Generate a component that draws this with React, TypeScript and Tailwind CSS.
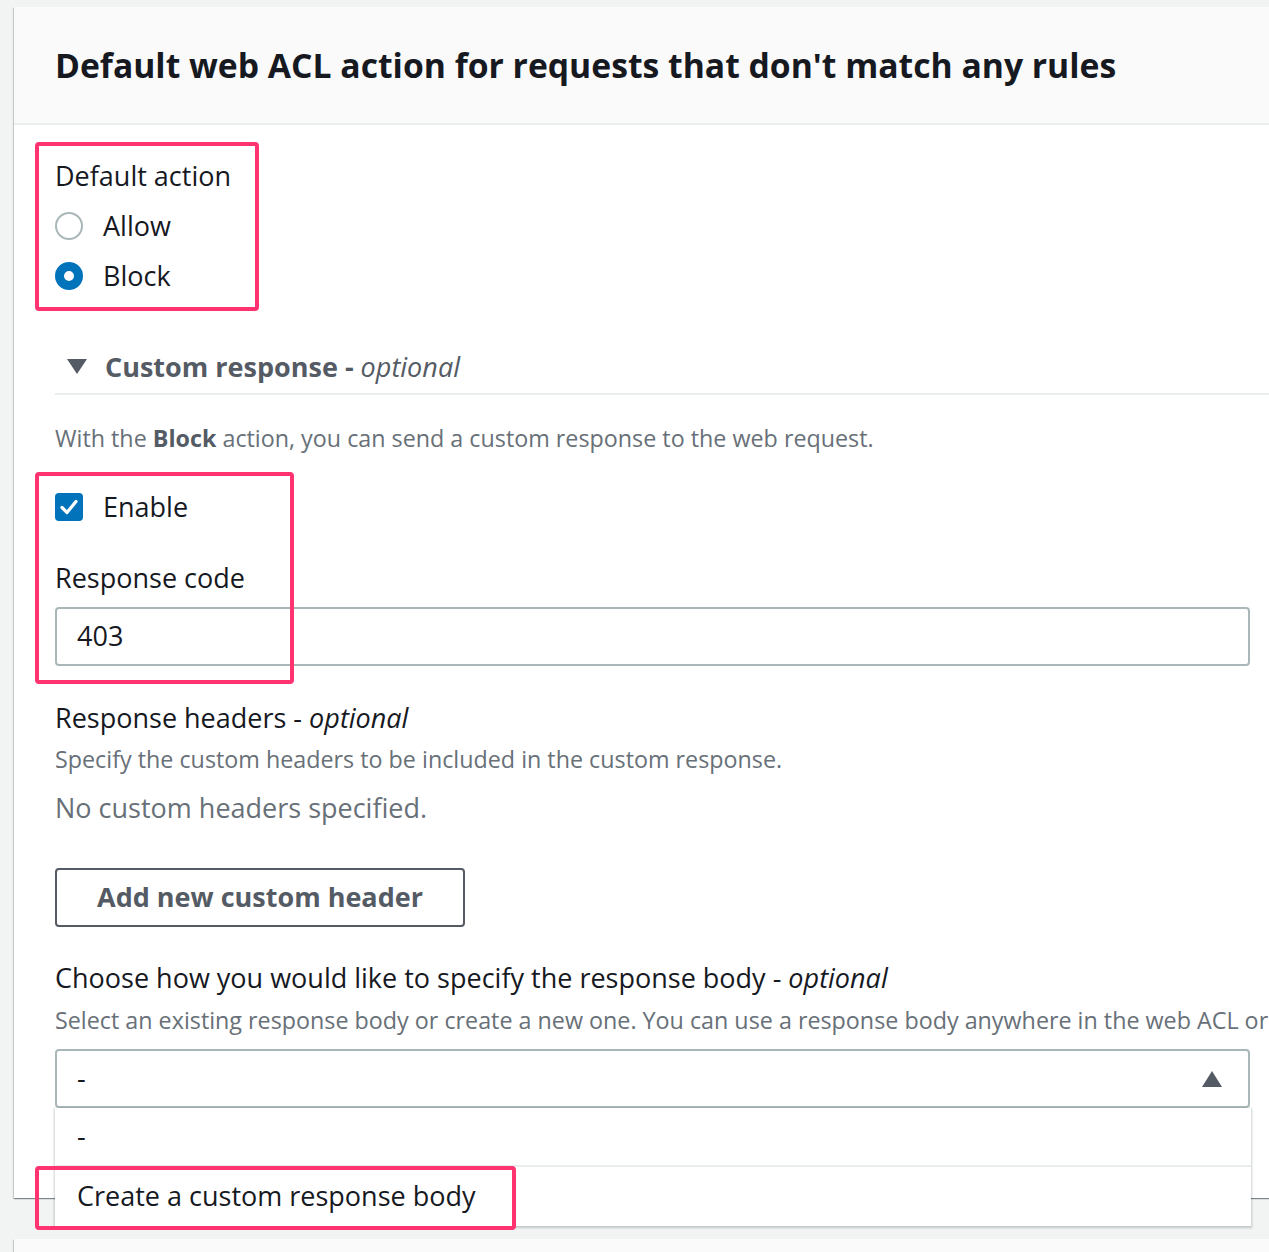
import React from "react";

export default function App() {
  return (
    <div
      className="w-[1269px] h-[1252px] overflow-hidden bg-[#f2f3f3] text-[#16191f]"
      style={{ fontFamily: '"Open Sans", "Noto Sans", sans-serif' }}
    >
      <div className="pt-[7px] pl-[14px]">
        <div className="w-[1300px] bg-white shadow-[0_1px_1px_0_rgba(0,28,36,0.3),1px_1px_1px_0_rgba(0,28,36,0.15),-1px_1px_1px_0_rgba(0,28,36,0.15)]">
          <div className="h-[118px] bg-[#fafafa] border-b-2 border-[#eaeded] pl-[41px] flex items-center">
            <h2 className="text-[33.7px] font-bold leading-[44px] whitespace-nowrap">
              Default web ACL action for requests that don't match any rules
            </h2>
          </div>
          <div className="pl-[41px] pb-[90px]">
            {/* Default action */}
            <div className="relative mt-[33px] w-fit pr-[20px]">
              <div className="absolute left-[-20px] top-[-16px] w-[224px] h-[169px] border-[4px] border-[#ff3370] rounded-[4px] pointer-events-none" />
              <div className="text-[27px] leading-[36px]">Default action</div>
              <div className="mt-[7px]">
                <div className="h-[50px] flex items-center">
                  <span className="w-[28px] h-[28px] rounded-full border-2 border-[#aab7b8] bg-white" />
                  <span className="ml-[20px] text-[27px] leading-[36px]">Allow</span>
                </div>
                <div className="h-[50px] flex items-center">
                  <span className="w-[28px] h-[28px] rounded-full border-[9px] border-[#0073bb] bg-white" />
                  <span className="ml-[20px] text-[27px] leading-[36px]">Block</span>
                </div>
              </div>
            </div>

            {/* Custom response expandable */}
            <div className="mt-[39px] h-[55px] border-b-2 border-[#eaeded] flex items-center">
              <svg width="20" height="15" viewBox="0 0 20 15" className="ml-[12px]">
                <polygon points="0,0 20,0 10,15" fill="#545b64" />
              </svg>
              <span className="ml-[18px] text-[27px] leading-[36px] text-[#545b64]">
                <span className="font-bold">Custom response</span>
                <span className="font-bold"> - </span>
                <span className="italic">optional</span>
              </span>
            </div>

            <div className="mt-[27px] text-[23.3px] leading-[32px] text-[#687078]">
              With the <span className="font-bold text-[#545b64]">Block</span> action, you can send a custom response to the web request.
            </div>

            {/* Enable + Response code */}
            <div className="relative mt-[33px]">
              <div className="absolute left-[-20px] top-[-15px] w-[259px] h-[212px] border-[4px] border-[#ff3370] rounded-[4px] pointer-events-none z-10" />
              <div className="h-[40px] flex items-center">
                <span className="w-[28px] h-[28px] rounded-[4px] bg-[#0073bb] flex items-center justify-center">
                  <svg width="20" height="20" viewBox="0 0 20 20">
                    <polyline points="3,10.5 8,15.5 17,4.5" fill="none" stroke="white" strokeWidth="3.2" strokeLinecap="round" strokeLinejoin="round" />
                  </svg>
                </span>
                <span className="ml-[20px] text-[27px] leading-[36px]">Enable</span>
              </div>
              <div className="mt-[33px] text-[27px] leading-[36px]">Response code</div>
              <div className="mt-[11px] w-[1195px] h-[59px] border-2 border-[#aab7b8] rounded-[4px] bg-white flex items-center pl-[20px] text-[27px]">
                403
              </div>
            </div>

            <div className="mt-[34px] text-[27px] leading-[36px]">
              Response headers - <span className="italic">optional</span>
            </div>
            <div className="mt-[7px] text-[23.3px] leading-[32px] text-[#687078]">
              Specify the custom headers to be included in the custom response.
            </div>
            <div className="mt-[15px] text-[27px] leading-[36px] text-[#687078]">
              No custom headers specified.
            </div>
            <button className="mt-[42px] w-[410px] h-[59px] border-2 border-[#545b64] rounded-[4px] bg-white text-[27px] font-bold text-[#545b64] flex items-center justify-center">
              Add new custom header
            </button>

            <div className="mt-[33px] text-[27px] leading-[36px] whitespace-nowrap">
              Choose how you would like to specify the response body - <span className="italic">optional</span>
            </div>
            <div className="mt-[8px] text-[23.3px] leading-[32px] text-[#687078] whitespace-nowrap">
              Select an existing response body or create a new one. You can use a response body anywhere in the web ACL or
            </div>

            {/* Select with open dropdown */}
            <div className="relative mt-[13px] w-[1195px]">
              <div className="h-[59px] border-2 border-[#aab7b8] rounded-[4px] bg-white flex items-center pl-[20px] pr-[26px] text-[27px]">
                <span className="flex-1">-</span>
                <svg width="20" height="16" viewBox="0 0 20 16">
                  <polygon points="10,0 20,16 0,16" fill="#545b64" />
                </svg>
              </div>
              <div className="absolute left-0 top-full w-[1196px] bg-white shadow-[0_1px_2px_1px_rgba(0,28,36,0.2)] z-20">
                <div className="h-[59px] flex items-center pl-[22px] text-[27px] border-b-2 border-[#eaeded]">-</div>
                <div className="h-[59px] flex items-center pl-[22px] text-[27px]">Create a custom response body</div>
                <div className="absolute left-[-20px] top-[58px] w-[481px] h-[64px] border-[4px] border-[#ff3370] rounded-[4px] pointer-events-none" />
              </div>
            </div>
          </div>
        </div>
        <div className="mt-[41px] w-[1300px] h-[40px] bg-[#fafafa] shadow-[0_1px_1px_0_rgba(0,28,36,0.3),1px_1px_1px_0_rgba(0,28,36,0.15),-1px_1px_1px_0_rgba(0,28,36,0.15)]" />
      </div>
    </div>
  );
}
